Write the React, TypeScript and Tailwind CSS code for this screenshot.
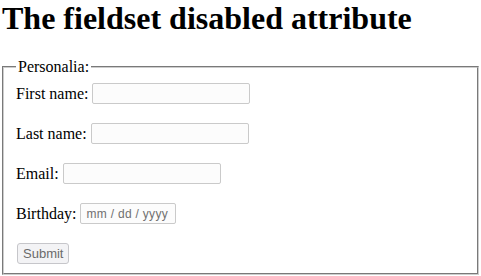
import React, { FC } from "react";

const serif = "font-['Liberation_Serif','Times_New_Roman',serif]";
const sans = "font-['Liberation_Sans',Arial,sans-serif]";

const fields = [
  { id: "fname", label: "First name:" },
  { id: "lname", label: "Last name:" },
  { id: "email", label: "Email:" },
];

const App: FC = () => {
  return (
    <div className={`${serif} h-[276px] w-[481px] overflow-hidden bg-white text-black`}>
      <h1 className="mb-[21px] pl-[2px] text-[32px] leading-[37px] font-bold">
        The fieldset disabled attribute
      </h1>
      <form>
        <fieldset
          disabled
          className="mx-[2px] border-2 border-[#cdcdcd] px-[12px] pt-[7px] pb-[9px] [border-style:groove]"
        >
          <legend className="px-[2px] text-[16px] leading-[18px]">Personalia:</legend>
          <div className="flex flex-col gap-[19px] text-[16px]">
            {fields.map(({ id, label }) => (
              <div key={id} className="flex h-[21px] items-center gap-[4px]">
                <label htmlFor={id}>{label}</label>
                <input
                  id={id}
                  type="text"
                  className="h-[21px] w-[158px] rounded-[2px] border border-[#cacaca] bg-[#fcfcfc]"
                />
              </div>
            ))}
            <div className="flex h-[21px] items-center gap-[4px]">
              <label htmlFor="birthday">Birthday:</label>
              <input
                id="birthday"
                type="text"
                placeholder="mm / dd / yyyy"
                className={`${sans} h-[21px] w-[96px] rounded-[2px] border border-[#cacaca] bg-[#fcfcfc] pl-[5px] text-[12px] tracking-[0.3px] placeholder:text-[#707070]`}
              />
            </div>
            <div className="flex h-[21px] items-center">
              <button
                type="submit"
                className={`${sans} ml-px h-[21px] rounded-[3px] border border-[#c6c6ca] bg-[#f3f3f5] px-[5px] text-[13px] text-[#6a6a6a]`}
              >
                Submit
              </button>
            </div>
          </div>
        </fieldset>
      </form>
    </div>
  );
};

export default App;
